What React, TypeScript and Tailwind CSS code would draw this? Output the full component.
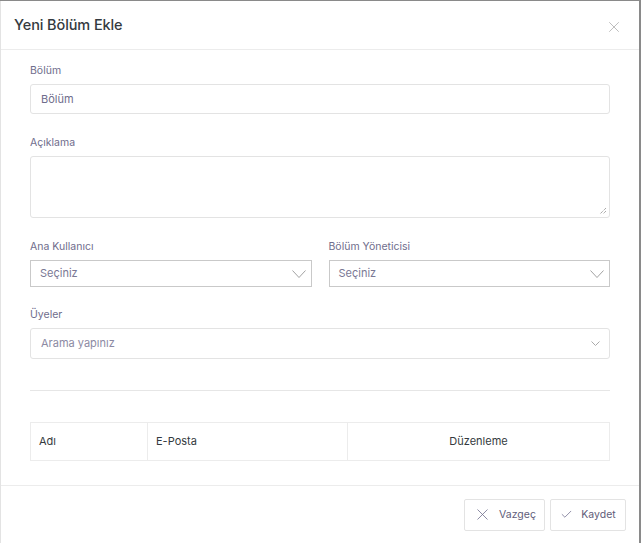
import { X, Check } from 'lucide-react';

const font = { fontFamily: 'Inter, "Noto Sans", sans-serif' };

function Label({ children }: { children: React.ReactNode }) {
  return <div className="h-[11px] text-[10.5px] leading-[11px] text-[#6f6d8c] mb-[8px]">{children}</div>;
}

function Chevron({ w, h, color, sw = 1 }: { w: number; h: number; color: string; sw?: number }) {
  return (
    <svg width={w} height={h} viewBox={`0 0 ${w} ${h}`} fill="none">
      <path d={`M0.5 0.5L${w / 2} ${h - 0.5}L${w - 0.5} 0.5`} stroke={color} strokeWidth={sw} />
    </svg>
  );
}

function NativeSelect() {
  return (
    <div className="h-[27px] border border-[#c9c9c9] bg-white flex items-center justify-between pl-[9px] pr-[5px]">
      <span className="text-[11px] text-[#7a7894]">Seçiniz</span>
      <Chevron w={14} h={8} color="#8a8a8a" sw={0.8} />
    </div>
  );
}

export default function App() {
  return (
    <div className="w-[641px] h-[543px] bg-[#8a8a8a] pt-px pr-[2px] overflow-hidden" style={font}>
      <div className="w-[639px] h-[542px] bg-white border-l border-[#e3e3e3] flex flex-col">
        {/* header */}
        <div className="h-[49px] border-b border-[#ececec] flex items-center justify-between pl-[13px] pr-[16px] shrink-0">
          <h2 className="text-[14.5px] font-medium text-[#343a40] tracking-[-0.1px]">Yeni Bölüm Ekle</h2>
          <X size={18} strokeWidth={1} className="text-[#a8a8a8] mt-[3px]" />
        </div>

        {/* body */}
        <div className="px-[29px] pt-[15px] flex-1">
          <Label>Bölüm</Label>
          <div className="h-[30px] border border-[#e3e3e3] rounded-[3px] flex items-center px-[10px]">
            <span className="text-[11px] text-[#6f6d8c]">Bölüm</span>
          </div>

          <div className="mt-[23px]">
            <Label>Açıklama</Label>
            <div className="h-[62px] border border-[#e3e3e3] rounded-[3px] relative">
              <svg className="absolute right-[2px] bottom-[2px]" width="8" height="8" viewBox="0 0 8 8">
                <path d="M7 1L1 7M7 4L4 7" stroke="#666" strokeWidth="0.8" strokeDasharray="1 1" />
              </svg>
            </div>
          </div>

          <div className="mt-[23px] grid grid-cols-2 gap-[17px]">
            <div>
              <Label>Ana Kullanıcı</Label>
              <NativeSelect />
            </div>
            <div>
              <Label>Bölüm Yöneticisi</Label>
              <NativeSelect />
            </div>
          </div>

          <div className="mt-[22px]">
            <Label>Üyeler</Label>
            <div className="h-[31px] border border-[#e3e3e3] rounded-[3px] flex items-center justify-between pl-[10px] pr-[9px]">
              <span className="text-[11px] text-[#8c8aa3]">Arama yapınız</span>
              <Chevron w={9} h={5} color="#aaa" />
            </div>
          </div>

          <div className="mt-[31px] border-t border-[#e6e6e6]" />

          <div className="mt-[31px] border border-[#ececec] grid grid-cols-[117px_200px_1fr] h-[39px] text-[11px] text-[#343a40]">
            <div className="flex items-center pl-[8px] border-r border-[#ececec]">Adı</div>
            <div className="flex items-center pl-[8px] border-r border-[#ececec]">E-Posta</div>
            <div className="flex items-center justify-center">Düzenleme</div>
          </div>
        </div>

        {/* footer */}
        <div className="h-[58px] border-t border-[#ececec] flex items-center justify-end gap-[5px] pr-[13px] shrink-0">
          <button className="h-[32px] w-[81px] border border-[#e3e3e3] rounded-[2px] flex items-center justify-center gap-[7px] text-[10.5px] text-[#5f5d7a]">
            <X size={19} strokeWidth={1} className="text-[#6f6d8c]" />
            Vazgeç
          </button>
          <button className="h-[32px] w-[76px] border border-[#e3e3e3] rounded-[2px] flex items-center justify-center gap-[8px] text-[10.5px] text-[#5f5d7a]">
            <Check size={13} strokeWidth={1.4} className="text-[#6f6d8c]" />
            Kaydet
          </button>
        </div>
      </div>
    </div>
  );
}
